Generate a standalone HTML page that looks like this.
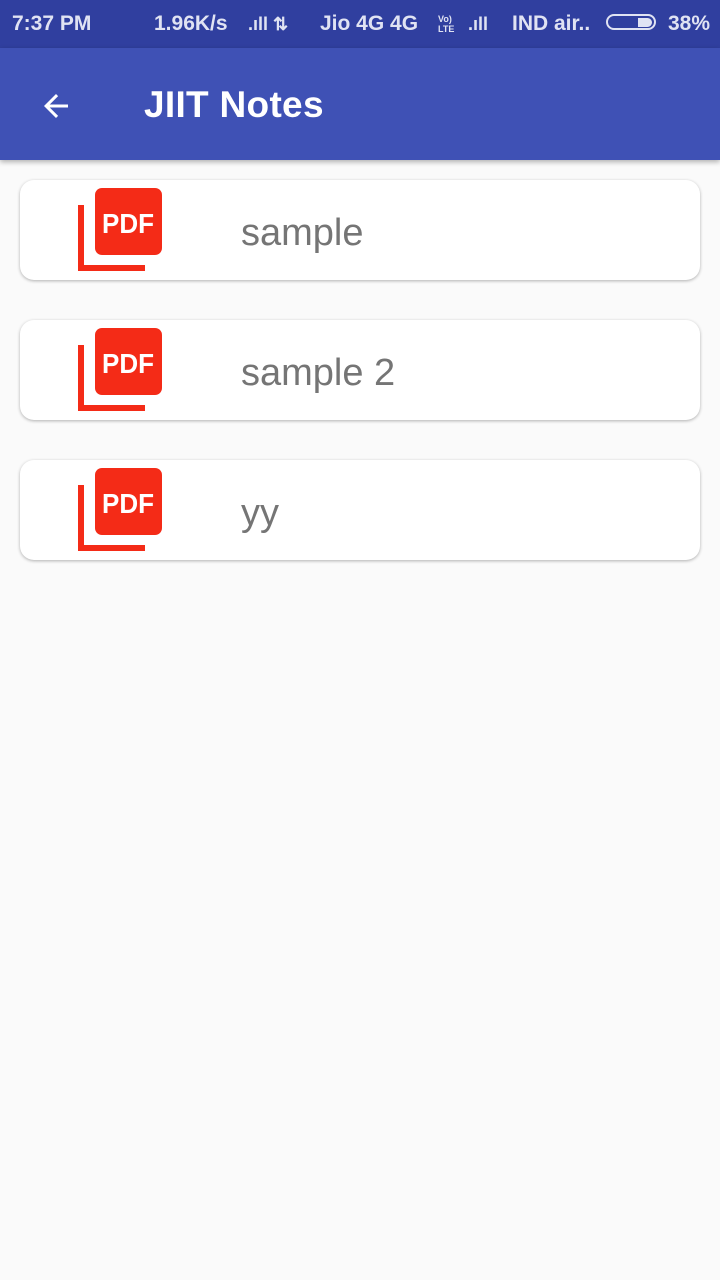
<!DOCTYPE html>
<html><head><meta charset="utf-8"><style>
body{margin:0;width:720px;height:1280px;background:#fafafa;font-family:"Liberation Sans",sans-serif;position:relative;overflow:hidden}
.sb{position:absolute;top:0;left:0;width:720px;height:48px;background:#303f9f;color:#e0e3f3;font-weight:bold;font-size:21px}
.sb span{position:absolute;top:12px}
.ab{position:absolute;top:48px;left:0;width:720px;height:112px;background:#3f51b5;box-shadow:0 2px 5px rgba(0,0,0,.3)}
.ab .t{position:absolute;left:144px;top:36px;color:#fff;font-size:37px;font-weight:bold;letter-spacing:0.3px}
.card{position:absolute;left:20px;width:680px;height:100px;background:#fff;border-radius:14px;box-shadow:0 1px 3px rgba(0,0,0,.3)}
.card .l{position:absolute;left:221px;top:32px;font-size:38px;color:#757575}
.ic{position:absolute;left:58px;top:8px;width:84px;height:84px}
</style></head><body>
<div class="sb"><span style="left:12px">7:37 PM</span><span style="left:154px">1.96K/s</span>
<span style="left:248px;font-size:18px;top:14px">.ıll ⇅ </span><span style="left:320px">Jio 4G 4G</span>
<span style="left:438px;font-size:9px;top:14px;line-height:10px">Vo)<br>LTE</span>
<span style="left:468px;font-size:18px;top:14px">.ıll</span><span style="left:512px">IND air..</span>
<span style="left:606px;top:14px;width:50px;height:16px;border:2px solid #e0e3f3;border-radius:10px;box-sizing:border-box"></span>
<span style="left:638px;top:18px;width:14px;height:9px;background:#e0e3f3;border-radius:0 5px 5px 0"></span>
<span style="left:668px">38%</span></div>
<div class="ab"><svg style="position:absolute;left:38px;top:40px" width="36" height="36" viewBox="0 0 24 24"><path d="M20 11H7.83l5.59-5.59L12 4l-8 8 8 8 1.41-1.41L7.83 13H20v-2z" fill="#fff"/></svg><div class="t">JIIT Notes</div></div>
<div class="card" style="top:180px"><svg class="ic" viewBox="0 0 84 84"><path d="M0 17h6v60h61v6H0z" fill="#f42b17"/><rect x="17" y="0" width="67" height="67" rx="7" fill="#f42b17"/><text x="50" y="45" fill="#fff" font-size="28" font-weight="bold" text-anchor="middle" font-family="Liberation Sans" textLength="52" lengthAdjust="spacingAndGlyphs">PDF</text></svg><div class="l">sample</div></div>
<div class="card" style="top:320px"><svg class="ic" viewBox="0 0 84 84"><path d="M0 17h6v60h61v6H0z" fill="#f42b17"/><rect x="17" y="0" width="67" height="67" rx="7" fill="#f42b17"/><text x="50" y="45" fill="#fff" font-size="28" font-weight="bold" text-anchor="middle" font-family="Liberation Sans" textLength="52" lengthAdjust="spacingAndGlyphs">PDF</text></svg><div class="l">sample 2</div></div>
<div class="card" style="top:460px"><svg class="ic" viewBox="0 0 84 84"><path d="M0 17h6v60h61v6H0z" fill="#f42b17"/><rect x="17" y="0" width="67" height="67" rx="7" fill="#f42b17"/><text x="50" y="45" fill="#fff" font-size="28" font-weight="bold" text-anchor="middle" font-family="Liberation Sans" textLength="52" lengthAdjust="spacingAndGlyphs">PDF</text></svg><div class="l">yy</div></div>
</body></html>
